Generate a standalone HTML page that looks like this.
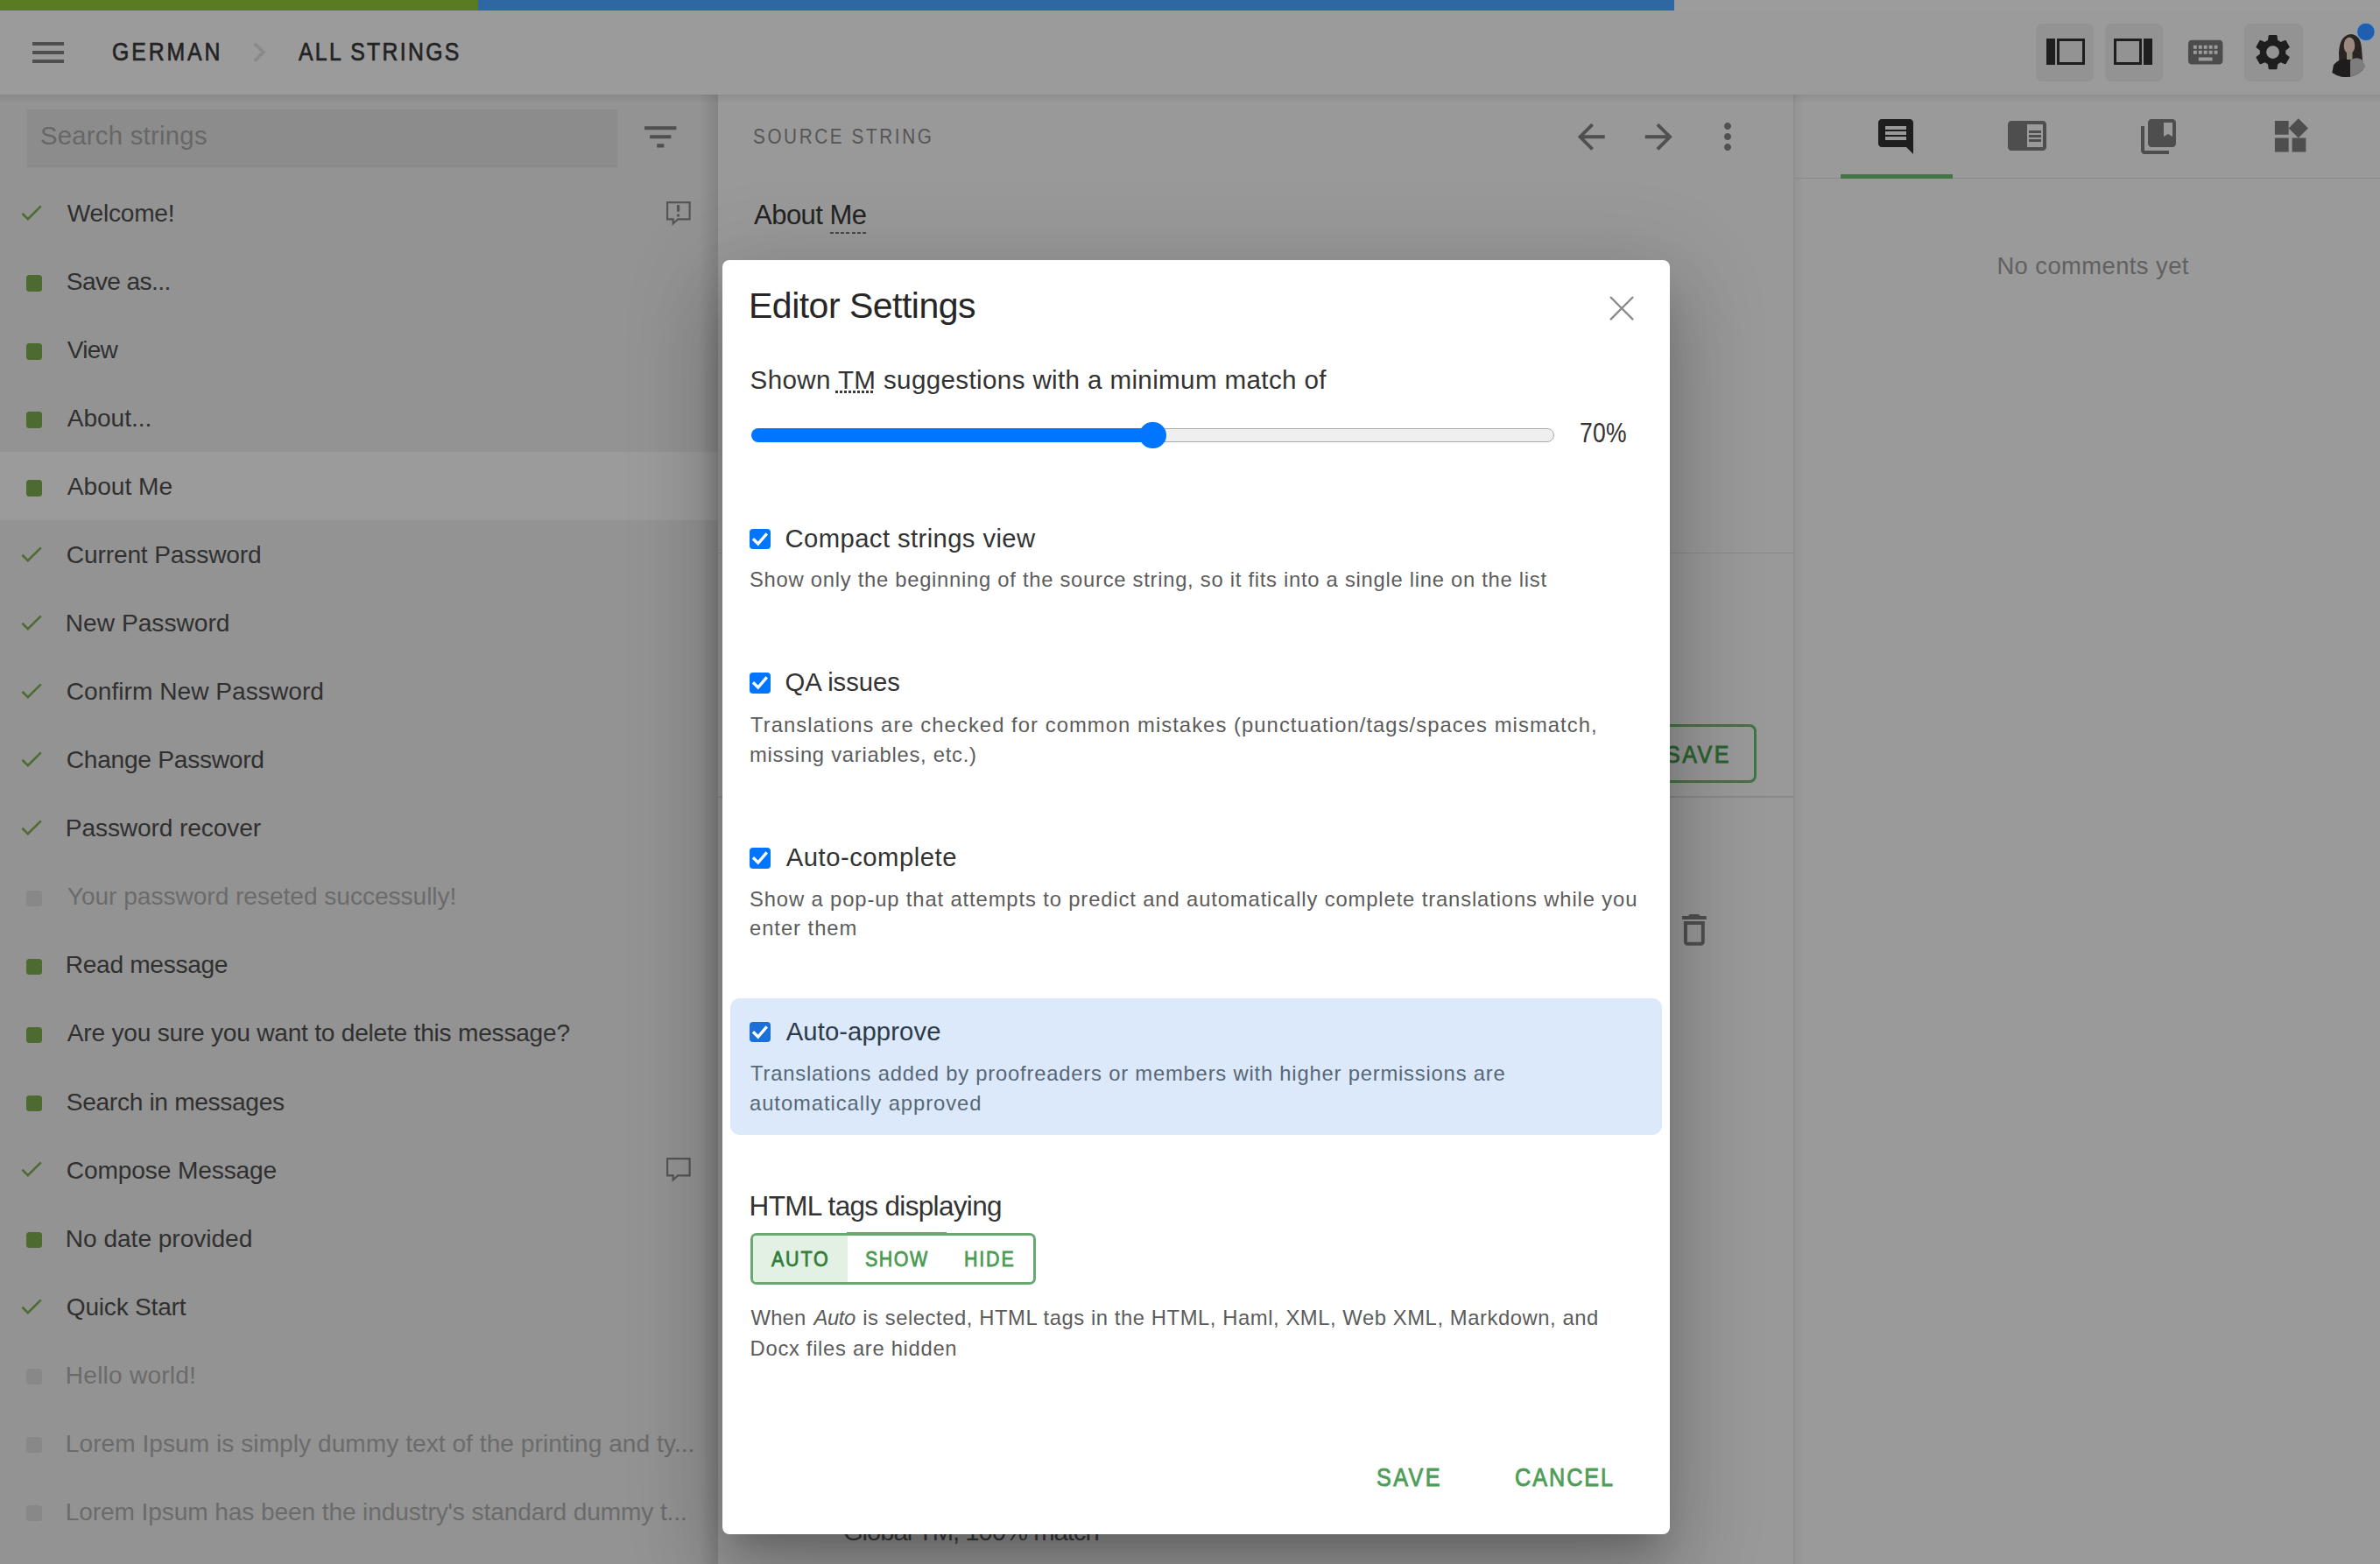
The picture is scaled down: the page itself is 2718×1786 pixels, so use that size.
<!DOCTYPE html>
<html><head><meta charset="utf-8"><title>Editor Settings</title>
<style>
html,body{margin:0;padding:0;width:2718px;height:1786px;overflow:hidden;background:#999}
body{position:relative;font-family:"Liberation Sans", sans-serif}
.b{position:absolute}
.ic{position:absolute;overflow:visible}
.t{position:absolute;white-space:pre;line-height:0;font-family:"Liberation Sans", sans-serif}
</style></head><body>
<div class="b" style="left:0;top:0;width:546px;height:12px;background:#5a7b22"></div><div class="b" style="left:546px;top:0;width:1366px;height:12px;background:#2f67a3"></div><div class="b" style="left:1912px;top:0;width:806px;height:12px;background:#9c9c9c"></div><div class="b" style="left:0;top:12px;width:2718px;height:96px;background:#9b9b9b"></div><div class="b" style="left:0;top:108px;width:820px;height:1678px;background:#939393"></div><div class="b" style="left:820px;top:108px;width:1228px;height:1678px;background:#999999"></div><div class="b" style="left:2048px;top:108px;width:2px;height:1678px;background:#8e8e8e"></div><div class="b" style="left:2050px;top:108px;width:668px;height:1678px;background:#9a9a9a"></div><div class="b" style="left:2050px;top:108px;width:10px;height:1678px;background:linear-gradient(90deg,rgba(0,0,0,0.045),rgba(0,0,0,0))"></div><div class="b" style="left:0;top:515.86px;width:820px;height:78.04px;background:#9b9b9b"></div><div class="b" style="left:798px;top:108px;width:22px;height:1678px;background:linear-gradient(90deg,rgba(0,0,0,0),rgba(0,0,0,0.11))"></div><div class="b" style="left:0;top:108px;width:2718px;height:10px;background:linear-gradient(rgba(0,0,0,0.07),rgba(0,0,0,0))"></div><div class="b" style="left:31px;top:125px;width:674px;height:64px;background:#8c8c8c;border-radius:2px;box-shadow:0 1.5px 2px rgba(0,0,0,0.08)"></div><svg class="ic" style="left:31.00px;top:36.00px;width:48.00px;height:48.00px;" viewBox="0 0 24 24"><path fill="#4f4f4f" d="M3 18h18v-2H3v2zm0-5h18v-2H3v2zm0-7v2h18V6H3z"/></svg><svg class="ic" style="left:272.70px;top:36.60px;width:45.60px;height:45.60px;" viewBox="0 0 24 24"><path fill="#8a8a8a" d="M10 6L8.59 7.41 13.17 12l-4.58 4.59L10 18l6-6z"/></svg><div class="b" style="left:2324.6px;top:26.7px;width:66.7px;height:66.7px;background:#939393;border-radius:7px"></div><div class="b" style="left:2403.6px;top:26.7px;width:66px;height:66.7px;background:#939393;border-radius:7px"></div><div class="b" style="left:2563.4px;top:26.7px;width:66.4px;height:66.7px;background:#939393;border-radius:7px"></div><div class="b" style="left:2337px;top:44px;width:9.5px;height:29.7px;background:#1e1e1e"></div><div class="b" style="left:2349px;top:44px;width:31.8px;height:29.7px;border:3.6px solid #1e1e1e;box-sizing:border-box"></div><div class="b" style="left:2414px;top:44px;width:31.8px;height:29.7px;border:3.6px solid #1e1e1e;box-sizing:border-box"></div><div class="b" style="left:2448.4px;top:44px;width:9.6px;height:29.7px;background:#1e1e1e"></div><svg class="ic" style="left:2495.00px;top:36.10px;width:47.40px;height:47.40px;" viewBox="0 0 24 24"><path fill="#4c4c4c" d="M20 5H4c-1.1 0-1.99.9-1.99 2L2 17c0 1.1.9 2 2 2h16c1.1 0 2-.9 2-2V7c0-1.1-.9-2-2-2zm-9 3h2v2h-2V8zm0 3h2v2h-2v-2zM8 8h2v2H8V8zm0 3h2v2H8v-2zm-1 2H5v-2h2v2zm0-3H5V8h2v2zm9 7H8v-2h8v2zm0-4h-2v-2h2v2zm0-3h-2V8h2v2zm3 3h-2v-2h2v2zm0-3h-2V8h2v2z"/></svg><svg class="ic" style="left:2571.00px;top:35.30px;width:49.20px;height:49.20px;" viewBox="0 0 24 24"><path fill="#1e1e1e" d="M19.14 12.94c.04-.3.06-.61.06-.94 0-.32-.02-.64-.07-.94l2.03-1.58c.18-.14.23-.41.12-.61l-1.92-3.32c-.12-.22-.37-.29-.59-.22l-2.39.96c-.5-.38-1.03-.7-1.62-.94l-.36-2.54c-.04-.24-.24-.41-.48-.41h-3.84c-.24 0-.43.17-.47.41l-.36 2.54c-.59.24-1.13.57-1.62.94l-2.39-.96c-.22-.08-.47 0-.59.22L2.74 8.87c-.12.21-.08.47.12.61l2.03 1.58c-.05.3-.09.63-.09.94s.02.64.07.94l-2.03 1.58c-.18.14-.23.41-.12.61l1.92 3.32c.12.22.37.29.59.22l2.39-.96c.5.38 1.03.7 1.62.94l.36 2.54c.05.24.24.41.48.41h3.84c.24 0 .44-.17.47-.41l.36-2.54c.59-.24 1.13-.56 1.62-.94l2.39.96c.22.08.47 0 .59-.22l1.92-3.32c.12-.22.07-.47-.12-.61l-2.01-1.58zM12 15.6c-1.98 0-3.6-1.62-3.6-3.6s1.62-3.6 3.6-3.6 3.6 1.62 3.6 3.6-1.62 3.6-3.6 3.6z"/></svg><svg class="ic" style="left:2640px;top:20px;width:78px;height:80px" viewBox="2640 20 78 80"><defs><clipPath id="av"><circle cx="2679" cy="60.8" r="27.2"/></clipPath></defs><circle cx="2679" cy="60.8" r="27.2" fill="#9b9b9b"/><g clip-path="url(#av)"><path d="M2672 88 L2671 60 Q2672 40 2685 39 Q2696 40 2697 55 L2699 82 L2690 88 Z" fill="#2a2423"/><ellipse cx="2683" cy="52" rx="6.3" ry="9.5" fill="#9c8880"/><rect x="2680" y="59" width="6.5" height="9" fill="#8e877c"/><path d="M2662 90 L2665 74 Q2670 68 2678 67 L2685 70 L2685 90 Z" fill="#1e1c1c"/><path d="M2684 90 L2684 69 Q2690 64 2697 68 Q2702 74 2703 84 L2700 90 Z" fill="#7d7d7d"/></g><circle cx="2701.9" cy="36.4" r="10.2" fill="#1f5fae" stroke="#7fa6d0" stroke-width="0.8"/></svg><svg class="ic" style="left:730.40px;top:131.70px;width:48.50px;height:48.50px;" viewBox="0 0 24 24"><path fill="#4f4f4f" d="M10 18h4v-2h-4v2zM3 6v2h18V6H3zm3 7h12v-2H6v2z"/></svg><svg class="ic" style="left:20.10px;top:226.90px;width:31.70px;height:31.70px;" viewBox="0 0 24 24"><path fill="#506b35" d="M9 16.17L4.83 12l-1.42 1.41L9 19 21 7l-1.41-1.41z"/></svg><div class="b" style="left:29.7px;top:314.34px;width:18.2px;height:18.2px;border-radius:3.5px;background:#4d6b31"></div><div class="b" style="left:29.7px;top:392.38px;width:18.2px;height:18.2px;border-radius:3.5px;background:#4d6b31"></div><div class="b" style="left:29.7px;top:470.42px;width:18.2px;height:18.2px;border-radius:3.5px;background:#4d6b31"></div><div class="b" style="left:29.7px;top:548.46px;width:18.2px;height:18.2px;border-radius:3.5px;background:#4d6b31"></div><svg class="ic" style="left:20.10px;top:617.10px;width:31.70px;height:31.70px;" viewBox="0 0 24 24"><path fill="#506b35" d="M9 16.17L4.83 12l-1.42 1.41L9 19 21 7l-1.41-1.41z"/></svg><svg class="ic" style="left:20.10px;top:695.14px;width:31.70px;height:31.70px;" viewBox="0 0 24 24"><path fill="#506b35" d="M9 16.17L4.83 12l-1.42 1.41L9 19 21 7l-1.41-1.41z"/></svg><svg class="ic" style="left:20.10px;top:773.18px;width:31.70px;height:31.70px;" viewBox="0 0 24 24"><path fill="#506b35" d="M9 16.17L4.83 12l-1.42 1.41L9 19 21 7l-1.41-1.41z"/></svg><svg class="ic" style="left:20.10px;top:851.22px;width:31.70px;height:31.70px;" viewBox="0 0 24 24"><path fill="#506b35" d="M9 16.17L4.83 12l-1.42 1.41L9 19 21 7l-1.41-1.41z"/></svg><svg class="ic" style="left:20.10px;top:929.26px;width:31.70px;height:31.70px;" viewBox="0 0 24 24"><path fill="#506b35" d="M9 16.17L4.83 12l-1.42 1.41L9 19 21 7l-1.41-1.41z"/></svg><div class="b" style="left:29.7px;top:1016.70px;width:18.2px;height:18.2px;border-radius:3.5px;background:#888888"></div><div class="b" style="left:29.7px;top:1094.74px;width:18.2px;height:18.2px;border-radius:3.5px;background:#4d6b31"></div><div class="b" style="left:29.7px;top:1172.78px;width:18.2px;height:18.2px;border-radius:3.5px;background:#4d6b31"></div><div class="b" style="left:29.7px;top:1250.82px;width:18.2px;height:18.2px;border-radius:3.5px;background:#4d6b31"></div><svg class="ic" style="left:20.10px;top:1319.46px;width:31.70px;height:31.70px;" viewBox="0 0 24 24"><path fill="#506b35" d="M9 16.17L4.83 12l-1.42 1.41L9 19 21 7l-1.41-1.41z"/></svg><div class="b" style="left:29.7px;top:1406.90px;width:18.2px;height:18.2px;border-radius:3.5px;background:#4d6b31"></div><svg class="ic" style="left:20.10px;top:1475.54px;width:31.70px;height:31.70px;" viewBox="0 0 24 24"><path fill="#506b35" d="M9 16.17L4.83 12l-1.42 1.41L9 19 21 7l-1.41-1.41z"/></svg><div class="b" style="left:29.7px;top:1562.98px;width:18.2px;height:18.2px;border-radius:3.5px;background:#888888"></div><div class="b" style="left:29.7px;top:1641.02px;width:18.2px;height:18.2px;border-radius:3.5px;background:#888888"></div><div class="b" style="left:29.7px;top:1719.06px;width:18.2px;height:18.2px;border-radius:3.5px;background:#888888"></div><svg class="ic" style="left:755px;top:225.1px;width:40px;height:40px" viewBox="755 225.1 40 40"><path fill="#555" fill-rule="evenodd" d="M761 230.1 H788.7 V251.6 H774.6 L767.6 257.8 V251.6 H761 Z M763.2 232.29999999999998 H786.5 V249.4 H773.7 L769.8 253.1 V249.4 H763.2 Z"/><rect x="773" y="234.0" width="3.2" height="7.8" fill="#555"/><ellipse cx="774.6" cy="246.1" rx="1.65" ry="1.8" fill="#555"/></svg><svg class="ic" style="left:755px;top:1317.1px;width:40px;height:40px" viewBox="755 1317.1 40 40"><path fill="#555" fill-rule="evenodd" d="M761 1322.1 H788.7 V1343.6 H774.6 L767.6 1349.8 V1343.6 H761 Z M763.2 1324.3 H786.5 V1341.3999999999999 H773.7 L769.8 1345.1 V1341.3999999999999 H763.2 Z"/></svg><svg class="ic" style="left:1794.25px;top:132.85px;width:46.50px;height:46.50px;" viewBox="0 0 24 24"><path fill="#505050" d="M20 11H7.83l5.59-5.59L12 4l-8 8 8 8 1.41-1.41L7.83 13H20v-2z"/></svg><svg class="ic" style="left:1871.05px;top:132.85px;width:46.50px;height:46.50px;" viewBox="0 0 24 24"><path fill="#505050" d="M12 4l-1.41 1.41L16.17 11H4v2h12.17l-5.58 5.59L12 20l8-8z"/></svg><svg class="ic" style="left:1949.20px;top:132.00px;width:48.00px;height:48.00px;" viewBox="0 0 24 24"><path fill="#505050" d="M12 8c1.1 0 2-.9 2-2s-.9-2-2-2-2 .9-2 2 .9 2 2 2zm0 2c-1.1 0-2 .9-2 2s.9 2 2 2 2-.9 2-2-.9-2-2-2zm0 6c-1.1 0-2 .9-2 2s.9 2 2 2 2-.9 2-2-.9-2-2-2z"/></svg><div class="b" style="left:948px;top:265.2px;width:41.8px;height:2px;background:repeating-linear-gradient(90deg,#4a4a4a 0 3.9px,transparent 3.9px 6.15px)"></div><div class="b" style="left:819px;top:630.5px;width:1229px;height:1.5px;background:#8a8a8a"></div><div class="b" style="left:819px;top:909px;width:1229px;height:1.5px;background:#8a8a8a"></div><div class="b" style="left:1860px;top:827px;width:146px;height:67.4px;border:3.6px solid #3d7642;border-radius:8px;box-sizing:border-box"></div><svg class="ic" style="left:1910.75px;top:1038.00px;width:47.70px;height:47.70px;" viewBox="0 0 24 24"><path fill="#505050" d="M6 19c0 1.1.9 2 2 2h8c1.1 0 2-.9 2-2V7H6v12zM8 9h8v10H8V9zm7.5-5l-1-1h-5l-1 1H5v2h14V4z"/></svg><svg class="ic" style="left:2141.00px;top:132.00px;width:48.00px;height:48.00px;" viewBox="0 0 24 24"><path fill="#1e1e1e" d="M21.99 4c0-1.1-.89-2-1.99-2H4c-1.1 0-2 .9-2 2v12c0 1.1.9 2 2 2h14l4 4-.01-18zM18 14H6v-2h12v2zm0-3H6V9h12v2zm0-3H6V6h12v2z"/></svg><svg class="ic" style="left:2290.90px;top:130.20px;width:48.00px;height:48.00px;" viewBox="0 0 24 24"><path fill="#4e4e4e" d="M21 4H3c-1.1 0-2 .9-2 2v13c0 1.1.9 2 2 2h18c1.1 0 2-.9 2-2V6c0-1.1-.9-2-2-2zm0 15h-9V6h9v13zm-8-9.5h7V11h-7V9.5zm0 2.5h7v1.5h-7V12zm0 2.5h7V16h-7v-1.5z"/></svg><svg class="ic" style="left:2441.00px;top:132.00px;width:48.00px;height:48.00px;" viewBox="0 0 24 24"><path fill="#4e4e4e" d="M4 6H2v14c0 1.1.9 2 2 2h14v-2H4V6zm16-4H8c-1.1 0-2 .9-2 2v12c0 1.1.9 2 2 2h12c1.1 0 2-.9 2-2V4c0-1.1-.9-2-2-2zm0 10l-2.5-1.5L15 12V4h5v8z"/></svg><svg class="ic" style="left:2591.90px;top:132.10px;width:47.30px;height:47.30px;" viewBox="0 0 24 24"><path fill="#4e4e4e" d="M13 13v8h8v-8h-8zM3 21h8v-8H3v8zM3 3v8h8V3H3zm13.66-1.31L11 7.34 16.66 13l5.66-5.66-5.66-5.65z"/></svg><div class="b" style="left:2050px;top:202.7px;width:668px;height:1.5px;background:#8a8a8a"></div><div class="b" style="left:2101.5px;top:198.6px;width:128.1px;height:5.1px;background:#437646"></div>
<div class="t" style="left:128.44px;top:59px;font-size:28.8px;letter-spacing:3.419px;color:#232323;-webkit-text-stroke:0.7px #232323;transform:scaleX(0.86);transform-origin:0 0;">GERMAN</div><div class="t" style="left:341.30px;top:59px;font-size:28.8px;letter-spacing:2.688px;color:#232323;-webkit-text-stroke:0.7px #232323;transform:scaleX(0.86);transform-origin:0 0;">ALL STRINGS</div><div class="t" style="left:45.90px;top:155px;font-size:29.25px;letter-spacing:0.282px;color:#676767;">Search strings</div><div class="t" style="left:76.80px;top:244px;font-size:28.1px;letter-spacing:-0.239px;color:#303030;">Welcome!</div><div class="t" style="left:75.80px;top:322px;font-size:28.1px;letter-spacing:-0.613px;color:#303030;">Save as...</div><div class="t" style="left:76.80px;top:400px;font-size:28.1px;letter-spacing:-0.766px;color:#303030;">View</div><div class="t" style="left:76.80px;top:478px;font-size:28.1px;letter-spacing:-0.061px;color:#303030;">About...</div><div class="t" style="left:76.80px;top:556px;font-size:28.1px;letter-spacing:0.011px;color:#303030;">About Me</div><div class="t" style="left:75.80px;top:634px;font-size:28.1px;letter-spacing:-0.134px;color:#303030;">Current Password</div><div class="t" style="left:74.80px;top:712px;font-size:28.1px;letter-spacing:0.024px;color:#303030;">New Password</div><div class="t" style="left:75.80px;top:790px;font-size:28.1px;letter-spacing:0.033px;color:#303030;">Confirm New Password</div><div class="t" style="left:75.80px;top:868px;font-size:28.1px;letter-spacing:-0.246px;color:#303030;">Change Password</div><div class="t" style="left:74.80px;top:946px;font-size:28.1px;letter-spacing:-0.098px;color:#303030;">Password recover</div><div class="t" style="left:76.80px;top:1024px;font-size:28.1px;letter-spacing:-0.029px;color:#6b6b6b;">Your password reseted successully!</div><div class="t" style="left:74.80px;top:1102px;font-size:28.1px;letter-spacing:-0.303px;color:#303030;">Read message</div><div class="t" style="left:76.80px;top:1180px;font-size:28.1px;letter-spacing:-0.223px;color:#303030;">Are you sure you want to delete this message?</div><div class="t" style="left:75.80px;top:1259px;font-size:28.1px;letter-spacing:-0.311px;color:#303030;">Search in messages</div><div class="t" style="left:75.80px;top:1337px;font-size:28.1px;letter-spacing:-0.115px;color:#303030;">Compose Message</div><div class="t" style="left:74.80px;top:1415px;font-size:28.1px;letter-spacing:-0.030px;color:#303030;">No date provided</div><div class="t" style="left:75.80px;top:1493px;font-size:28.1px;letter-spacing:-0.224px;color:#303030;">Quick Start</div><div class="t" style="left:74.80px;top:1571px;font-size:28.1px;letter-spacing:0.213px;color:#6b6b6b;">Hello world!</div><div class="t" style="left:74.80px;top:1649px;font-size:28.1px;letter-spacing:0.043px;color:#6b6b6b;">Lorem Ipsum is simply dummy text of the printing and ty...</div><div class="t" style="left:74.80px;top:1727px;font-size:28.1px;letter-spacing:-0.108px;color:#6b6b6b;">Lorem Ipsum has been the industry's standard dummy t...</div><div class="t" style="left:860.00px;top:156px;font-size:23.0px;letter-spacing:2.897px;color:#555555;transform:scaleX(0.9);transform-origin:0 0;">SOURCE STRING</div><div class="t" style="left:861.00px;top:246px;font-size:31.0px;letter-spacing:-0.521px;color:#232323;">About Me</div><div class="t" style="left:1901.52px;top:861px;font-size:28.4px;letter-spacing:2.883px;color:#2b6230;-webkit-text-stroke:0.9px #2b6230;transform:scaleX(0.88);transform-origin:0 0;">SAVE</div><div class="t" style="left:962.90px;top:1749px;font-size:29.25px;letter-spacing:-1.019px;color:#3a3a3a;">Global TM, 100% match</div><div class="t" style="left:2280.40px;top:304px;font-size:27.4px;letter-spacing:0.422px;color:#616161;">No comments yet</div>
<div class="b" style="left:825px;top:297px;width:1082px;height:1455px;background:#fff;border-radius:8px;box-shadow:0 25px 34px -16px rgba(0,0,0,.2),0 54px 86px 7px rgba(0,0,0,.14),0 20px 104px 18px rgba(0,0,0,.12)"></div><svg class="ic" style="left:1838.4px;top:338.4px;width:28.1px;height:28.1px" viewBox="0 0 28.1 28.1"><path d="M1 1L27.1 27.1M27.1 1L1 27.1" stroke="#8c8c8c" stroke-width="2.4" fill="none"/></svg><div class="b" style="left:954px;top:446px;width:44px;height:3px;background:repeating-linear-gradient(90deg,#3a3a3a 0 2.6px,transparent 2.6px 5px)"></div><div class="b" style="left:1300px;top:489.1px;width:474.7px;height:15.6px;background:#efefef;border:1.2px solid #aaaaaa;border-radius:8px;box-sizing:border-box"></div><div class="b" style="left:857.6px;top:489.1px;width:470px;height:15.6px;background:#0075ff;border-radius:8px"></div><div class="b" style="left:1301.2px;top:481.7px;width:30.6px;height:30.6px;background:#0075ff;border-radius:50%"></div><div class="b" style="left:833.6px;top:1139.8px;width:1064px;height:156px;background:#dce9fa;border-radius:11px"></div><div class="b" style="left:856.3px;top:603.6px;width:23.8px;height:23.8px;background:#0075ff;border-radius:4px"></div><svg class="ic" style="left:856.3px;top:603.6px;width:23.8px;height:23.8px" viewBox="0 0 24 24"><path d="M5.2 12.6L9.8 17.2L18.8 6.8" stroke="#fff" stroke-width="3.4" fill="none" stroke-linecap="square"/></svg><div class="b" style="left:856.3px;top:767.8px;width:23.8px;height:23.8px;background:#0075ff;border-radius:4px"></div><svg class="ic" style="left:856.3px;top:767.8px;width:23.8px;height:23.8px" viewBox="0 0 24 24"><path d="M5.2 12.6L9.8 17.2L18.8 6.8" stroke="#fff" stroke-width="3.4" fill="none" stroke-linecap="square"/></svg><div class="b" style="left:856.3px;top:967.9px;width:23.8px;height:23.8px;background:#0075ff;border-radius:4px"></div><svg class="ic" style="left:856.3px;top:967.9px;width:23.8px;height:23.8px" viewBox="0 0 24 24"><path d="M5.2 12.6L9.8 17.2L18.8 6.8" stroke="#fff" stroke-width="3.4" fill="none" stroke-linecap="square"/></svg><div class="b" style="left:856.3px;top:1166.5px;width:23.8px;height:23.8px;background:#1a6fd9;border-radius:4px"></div><svg class="ic" style="left:856.3px;top:1166.5px;width:23.8px;height:23.8px" viewBox="0 0 24 24"><path d="M5.2 12.6L9.8 17.2L18.8 6.8" stroke="#fff" stroke-width="3.4" fill="none" stroke-linecap="square"/></svg><div class="b" style="left:856.8px;top:1408px;width:326px;height:59px;border:3px solid #6aa872;border-radius:7px;box-sizing:border-box;overflow:hidden"><div class="b" style="left:0;top:0;width:108px;height:54px;background:#e3f0e4"></div></div><div class="b" style="left:966.9px;top:1407.4px;width:114.3px;height:1px;background:#6aa872"></div><div class="b" style="left:966.9px;top:1466.4px;width:114.3px;height:1px;background:#6aa872"></div>
<div class="t" style="left:855.00px;top:349px;font-size:41.0px;letter-spacing:-0.510px;color:#262626;">Editor Settings</div><div class="t" style="left:856.60px;top:434px;font-size:29.6px;letter-spacing:0.357px;color:#333333;">Shown TM suggestions with a minimum match of</div><div class="t" style="left:1804.44px;top:495px;font-size:30.8px;letter-spacing:0.337px;color:#333333;transform:scaleX(0.86);transform-origin:0 0;">70%</div><div class="t" style="left:896.60px;top:615px;font-size:29.25px;letter-spacing:0.398px;color:#333333;">Compact strings view</div><div class="t" style="left:856.00px;top:662px;font-size:23.8px;letter-spacing:0.723px;color:#5c5c5c;">Show only the beginning of the source string, so it fits into a single line on the list</div><div class="t" style="left:896.50px;top:779px;font-size:29.25px;letter-spacing:-0.046px;color:#333333;">QA issues</div><div class="t" style="left:857.00px;top:828px;font-size:23.8px;letter-spacing:1.060px;color:#5c5c5c;">Translations are checked for common mistakes (punctuation/tags/spaces mismatch,</div><div class="t" style="left:856.00px;top:862px;font-size:23.8px;letter-spacing:0.740px;color:#5c5c5c;">missing variables, etc.)</div><div class="t" style="left:897.70px;top:979px;font-size:29.25px;letter-spacing:0.514px;color:#333333;">Auto-complete</div><div class="t" style="left:856.00px;top:1027px;font-size:23.8px;letter-spacing:0.869px;color:#5c5c5c;">Show a pop-up that attempts to predict and automatically complete translations while you</div><div class="t" style="left:856.00px;top:1060px;font-size:23.8px;letter-spacing:0.952px;color:#5c5c5c;">enter them</div><div class="t" style="left:897.70px;top:1178px;font-size:29.25px;letter-spacing:0.105px;color:#2c3b4a;">Auto-approve</div><div class="t" style="left:857.00px;top:1226px;font-size:23.8px;letter-spacing:0.793px;color:#566777;">Translations added by proofreaders or members with higher permissions are</div><div class="t" style="left:856.00px;top:1260px;font-size:23.8px;letter-spacing:0.939px;color:#566777;">automatically approved</div><div class="t" style="left:855.60px;top:1377px;font-size:31.5px;letter-spacing:-0.672px;color:#333333;">HTML tags displaying</div><div class="t" style="left:857.60px;top:1505px;font-size:23.8px;letter-spacing:0.157px;color:#5c5c5c;">When</div><div class="t" style="left:929.40px;top:1505px;font-size:23.8px;letter-spacing:-0.373px;color:#5c5c5c;font-style:italic;">Auto</div><div class="t" style="left:985.20px;top:1505px;font-size:23.8px;letter-spacing:0.568px;color:#5c5c5c;">is selected, HTML tags in the HTML, Haml, XML, Web XML, Markdown, and</div><div class="t" style="left:856.60px;top:1540px;font-size:23.8px;letter-spacing:0.686px;color:#5c5c5c;">Docx files are hidden</div><div class="t" style="left:881.35px;top:1438px;font-size:24.4px;letter-spacing:2.052px;color:#2f7d38;-webkit-text-stroke:0.8px #2f7d38;transform:scaleX(0.88);transform-origin:0 0;">AUTO</div><div class="t" style="left:987.67px;top:1438px;font-size:24.4px;letter-spacing:1.714px;color:#4a9a52;-webkit-text-stroke:0.8px #4a9a52;transform:scaleX(0.88);transform-origin:0 0;">SHOW</div><div class="t" style="left:1100.79px;top:1438px;font-size:24.4px;letter-spacing:2.050px;color:#4a9a52;-webkit-text-stroke:0.8px #4a9a52;transform:scaleX(0.88);transform-origin:0 0;">HIDE</div><div class="t" style="left:1572.02px;top:1687px;font-size:28.6px;letter-spacing:2.752px;color:#4e9e57;-webkit-text-stroke:0.9px #4e9e57;transform:scaleX(0.88);transform-origin:0 0;">SAVE</div><div class="t" style="left:1730.12px;top:1687px;font-size:28.6px;letter-spacing:2.274px;color:#4e9e57;-webkit-text-stroke:0.9px #4e9e57;transform:scaleX(0.88);transform-origin:0 0;">CANCEL</div>
</body></html>
